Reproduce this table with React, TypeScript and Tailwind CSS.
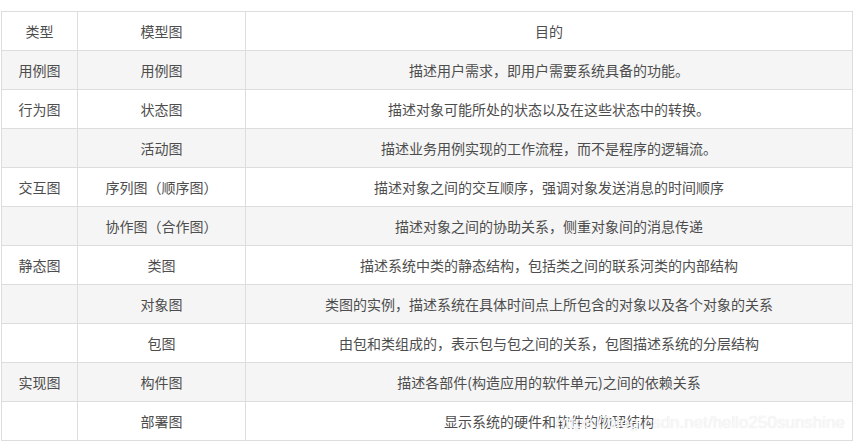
import React from 'react';

type Row = { kind: string; model: string; purpose: string };

const rows: Row[] = [
  { kind: '用例图', model: '用例图', purpose: '描述用户需求，即用户需要系统具备的功能。' },
  { kind: '行为图', model: '状态图', purpose: '描述对象可能所处的状态以及在这些状态中的转换。' },
  { kind: '', model: '活动图', purpose: '描述业务用例实现的工作流程，而不是程序的逻辑流。' },
  { kind: '交互图', model: '序列图（顺序图）', purpose: '描述对象之间的交互顺序，强调对象发送消息的时间顺序' },
  { kind: '', model: '协作图（合作图）', purpose: '描述对象之间的协助关系，侧重对象间的消息传递' },
  { kind: '静态图', model: '类图', purpose: '描述系统中类的静态结构，包括类之间的联系河类的内部结构' },
  { kind: '', model: '对象图', purpose: '类图的实例，描述系统在具体时间点上所包含的对象以及各个对象的关系' },
  { kind: '', model: '包图', purpose: '由包和类组成的，表示包与包之间的关系，包图描述系统的分层结构' },
  { kind: '实现图', model: '构件图', purpose: '描述各部件(构造应用的软件单元)之间的依赖关系' },
  { kind: '', model: '部署图', purpose: '显示系统的硬件和软件的物理结构' },
];

const cell = 'border border-[#dddddd] h-[39px] p-0 text-center align-middle font-normal';

export default function App() {
  return (
    <div
      className="relative w-[854px] h-[441px] bg-white overflow-hidden text-[#4d4d4d] text-[14px] leading-[20px]"
      style={{ fontFamily: '"Microsoft YaHei", "Noto Sans CJK SC", sans-serif' }}
    >
      <div className="pt-[11px] pl-[1px]">
        <table className="border-collapse table-fixed w-[852px]">
          <colgroup>
            <col className="w-[76px]" />
            <col className="w-[168px]" />
            <col />
          </colgroup>
          <thead>
            <tr className="bg-white">
              <th className={cell}>类型</th>
              <th className={cell}>模型图</th>
              <th className={cell}>目的</th>
            </tr>
          </thead>
          <tbody>
            {rows.map((r, i) => (
              <tr key={i} className={i % 2 === 0 ? 'bg-[#f5f5f5]' : 'bg-white'}>
                <td className={cell}>{r.kind}</td>
                <td className={cell}>{r.model}</td>
                <td className={cell}>{r.purpose}</td>
              </tr>
            ))}
          </tbody>
        </table>
      </div>
      {/* watermark */}
      <div
        className="absolute right-[9px] top-[412px] text-[17px] leading-[22px] text-white/80 pointer-events-none whitespace-nowrap"
        style={{ fontFamily: '"Liberation Sans", Arial, sans-serif', textShadow: '0 0 1px #d8d8d8' }}
      >
        https://blog.csdn.net/hello250sunshine
      </div>
    </div>
  );
}
